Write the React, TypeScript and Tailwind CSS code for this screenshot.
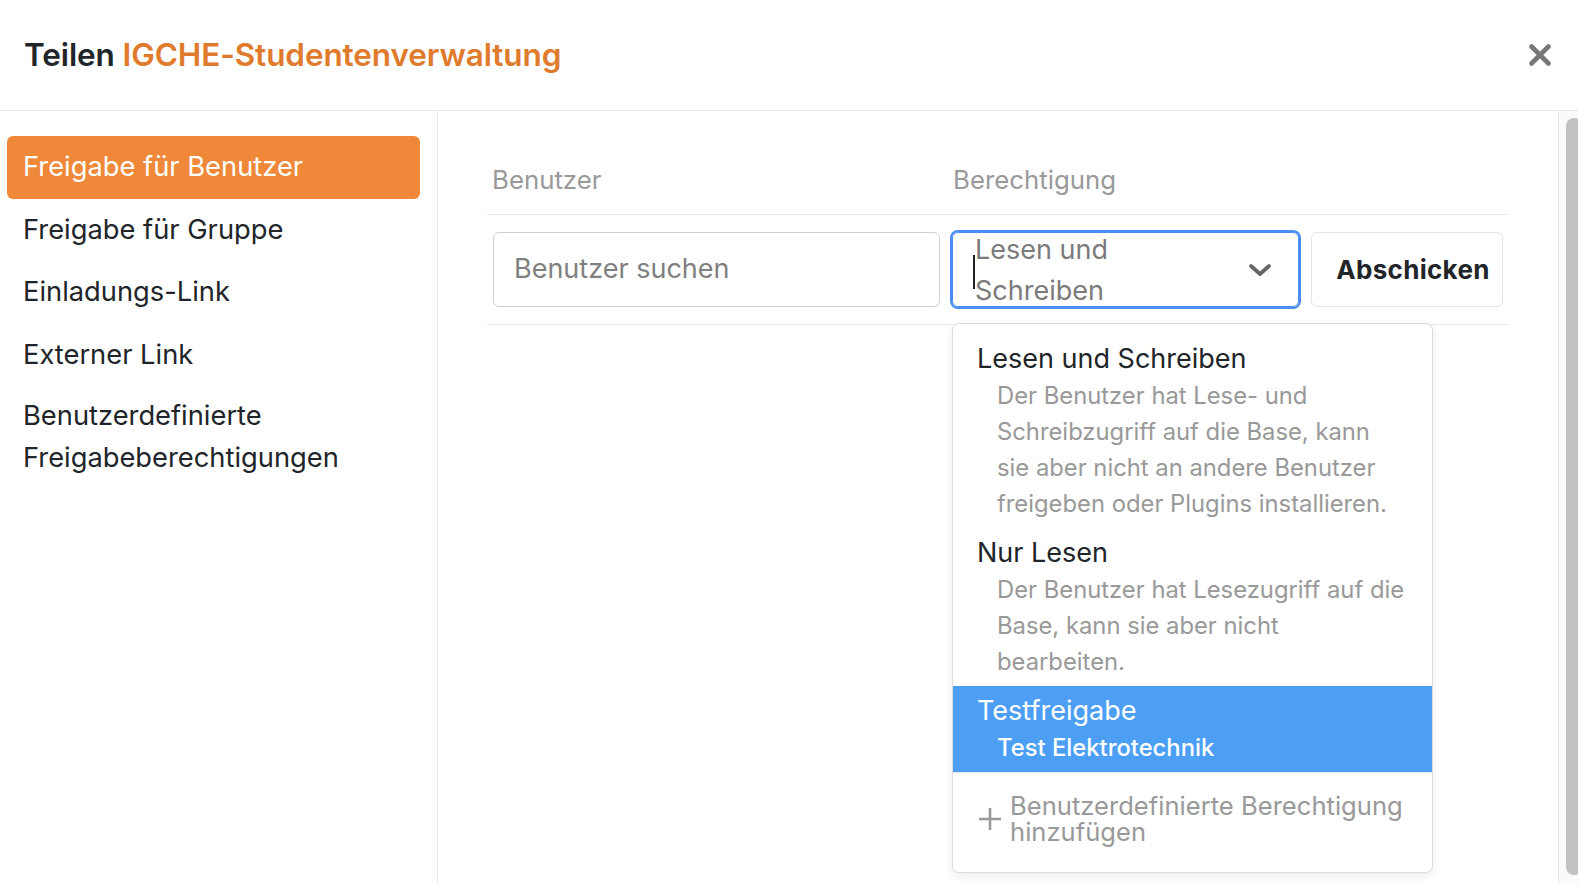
import { ReactNode } from 'react';

const NAV_ITEMS = [['Freigabe für Benutzer'], ['Freigabe für Gruppe'], ['Einladungs-Link'], ['Externer Link'], ['Benutzerdefinierte', 'Freigabeberechtigungen']];

export default function App() {
  return (
    <div className="flex h-[884px] w-[1578px] flex-col overflow-hidden bg-white font-['Inter',sans-serif] text-[#212529]">
      <header className="flex h-[111px] shrink-0 items-center justify-between border-b border-[#e9e9ec] pl-[24px] pr-[25px]">
        <h1 className="text-[31.5px] font-semibold tracking-[-0.1px]">
          Teilen <span className="text-[#e07b2d]">IGCHE-Studentenverwaltung</span>
        </h1>
        <button type="button" className="flex h-[26px] w-[26px] items-center justify-center text-[#777]">
          <svg width="24" height="24" viewBox="0 0 24 24" fill="none" stroke="currentColor" strokeWidth="4.6" strokeLinecap="round">
            <path d="M3.5 3.5l17 17M20.5 3.5l-17 17" />
          </svg>
        </button>
      </header>

      <div className="flex min-h-0 flex-1">
        <nav className="w-[438px] shrink-0 border-r border-[#ebebeb] pl-[7px] pr-[17px] pt-[25px]">
          {NAV_ITEMS.map((lines, index) => (
            <div
              key={lines[0]}
              className={`rounded-[6px] px-[16px] text-[27.3px] leading-[42px] ${
                index === 0 ? 'bg-[#ef8838] text-white' : 'text-[#212529]'
              } ${index === 4 ? 'pb-[10px] pt-[8.5px]' : 'py-[10.3px]'}`}
            >
              {lines.map((line) => (
                <div key={line} className="whitespace-nowrap">{line}</div>
              ))}
            </div>
          ))}
        </nav>

        <main className="min-w-0 flex-1 pl-[49px] pr-[49px] pt-[35px]">
          <div className="flex h-[69px] items-center border-b border-[#ebebeb] text-[25.8px] text-[#999]">
            <div className="w-[459px] px-[5px]">Benutzer</div>
            <div className="w-[359px] px-[7px]">Berechtigung</div>
          </div>

          <div className="flex border-b border-[#ebebeb]">
            <Cell width="w-[459px]">
              <div className="flex h-[75px] items-center rounded-[6px] border border-[#cfcfcf] px-[20px] text-[27px] text-[#808080]">Benutzer suchen</div>
            </Cell>
            <Cell width="w-[359px] relative">
              <div className="relative flex h-[75px] items-center rounded-[6px] border border-[#4b8cf5] pl-[22px] pr-[26px] ring-2 ring-[#4b8cf5]">
                <span className="text-[27px] leading-[41px] text-[#7b7b7b]">
                  <span className="block">Lesen und</span>
                  <span className="block">Schreiben</span>
                </span>
                <span className="absolute left-[20px] top-[22px] h-[34px] w-[2px] bg-[#222]" />
                <svg className="ml-auto text-[#666]" width="24" height="14" viewBox="0 0 24 14" fill="none" stroke="currentColor" strokeWidth="3.8" strokeLinecap="round" strokeLinejoin="round">
                  <path d="M3 3l9 8 9-8" />
                </svg>
              </div>
              <Dropdown />
            </Cell>
            <Cell width="flex-1">
              <button type="button" className="h-[75px] w-[192px] rounded-[6px] border border-[#e3e5e9] pl-[12px] text-[26px] font-bold tracking-[0.3px] text-[#212529]">
                Abschicken
              </button>
            </Cell>
          </div>
        </main>

        <div className="w-[20px] shrink-0 border-l border-[#e8e8e8] bg-[#fafafa] pl-[7px] pt-[7px]">
          <div className="h-[757px] w-[16px] rounded-[8px] bg-[#c1c1c1]" />
        </div>
      </div>
    </div>
  );
}

function Cell({ width, children }: { width: string; children: ReactNode }) {
  return <div className={`${width} px-[6px] py-[17px]`}>{children}</div>;
}

function Dropdown() {
  return (
    <div className="absolute left-[6px] top-[108px] z-10 w-[481px] overflow-hidden rounded-[7px] border border-[#dcdcdc] bg-white pt-[10px] shadow-[0_3px_10px_rgba(0,0,0,0.08)]">
      <Option
        title="Lesen und Schreiben"
        lines={['Der Benutzer hat Lese- und', 'Schreibzugriff auf die Base, kann', 'sie aber nicht an andere Benutzer', 'freigeben oder Plugins installieren.']}
      />
      <Option title="Nur Lesen" lines={['Der Benutzer hat Lesezugriff auf die', 'Base, kann sie aber nicht', 'bearbeiten.']} />
      <Option title="Testfreigabe" lines={['Test Elektrotechnik']} active />
      <div className="flex items-center border-t border-[#e6e6e6] pb-[27px] pl-[25px] pr-[20px] pt-[20px] text-[#999]">
        <svg width="24" height="24" viewBox="0 0 24 24" fill="none" stroke="currentColor" strokeWidth="2.6">
          <path d="M12 1v22M1 12h22" />
        </svg>
        <span className="ml-[8px] text-[25.6px] leading-[26px]">
          <span className="block whitespace-nowrap">Benutzerdefinierte Berechtigung</span>
          <span className="block">hinzufügen</span>
        </span>
      </div>
    </div>
  );
}

function Option({ title, lines, active = false }: { title: string; lines: string[]; active?: boolean }) {
  return (
    <div className={`px-[24px] py-[6px] ${active ? 'bg-[#4d9ff6] text-white' : ''}`}>
      <div className={`text-[27px] leading-[38px] ${active ? 'text-white' : 'text-[#212529]'}`}>{title}</div>
      <div className={`pl-[20px] text-[23.8px] leading-[36px] ${active ? 'font-medium text-white' : 'text-[#999]'}`}>
        {lines.map((line) => (
          <div key={line} className="whitespace-nowrap">{line}</div>
        ))}
      </div>
    </div>
  );
}
